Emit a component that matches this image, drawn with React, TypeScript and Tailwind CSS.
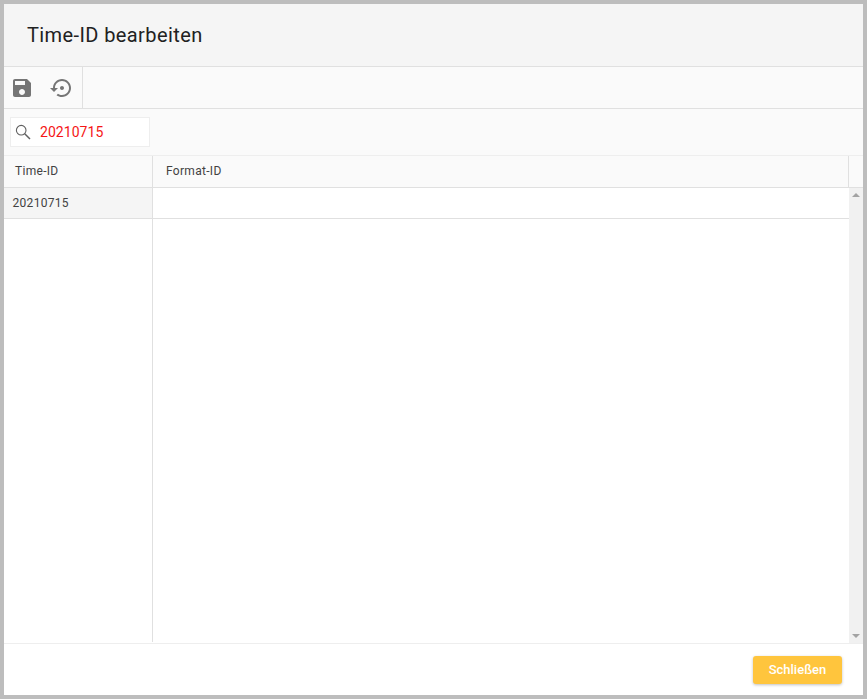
import React from 'react'

// Material icons, same shapes as the toolbar in the dialog
const SaveIcon = () => (
    <svg width="24" height="24" viewBox="0 0 24 24" fill="#757575">
        <path d="M17 3H5c-1.11 0-2 .9-2 2v14c0 1.1.89 2 2 2h14c1.1 0 2-.9 2-2V7l-4-4zm-5 16c-1.66 0-3-1.34-3-3s1.34-3 3-3 3 1.34 3 3-1.34 3-3 3zm3-10H5V5h10v4z" />
    </svg>
)

const RestoreIcon = () => (
    <svg width="24" height="24" viewBox="0 0 24 24" fill="#757575">
        <path d="M14 12c0-1.1-.9-2-2-2s-2 .9-2 2 .9 2 2 2 2-.9 2-2zm-2-9c-4.97 0-9 4.03-9 9H0l4 4 4-4H5c0-3.87 3.13-7 7-7s7 3.13 7 7-3.13 7-7 7c-1.51 0-2.91-.49-4.06-1.3l-1.42 1.44C8.04 20.3 9.94 21 12 21c4.97 0 9-4.03 9-9s-4.03-9-9-9z" />
    </svg>
)

const SearchIcon = () => (
    <svg width="16" height="16" viewBox="0 0 16 16" fill="none" stroke="#616161" strokeWidth="1.1">
        <circle cx="6.2" cy="6.2" r="4.8" />
        <path d="M9.7 9.7 L15 15" strokeWidth="1.5" />
    </svg>
)

export default function App() {
    return (
        <div className="w-[867px] h-[699px] border-4 border-[#bdbdbd] bg-white flex flex-col font-['Roboto',sans-serif] overflow-hidden">
            {/* Titel */}
            <div className="h-[63px] shrink-0 bg-[#f5f5f5] border-b border-[#e0e0e0] flex items-center pl-[23px]">
                <h1 className="text-[20px] font-normal text-[#212121] tracking-[0.4px]">Time-ID bearbeiten</h1>
            </div>

            {/* Toolbar */}
            <div className="h-[42px] shrink-0 bg-[#fafafa] border-b border-[#e0e0e0] flex">
                <div className="w-[79px] border-r border-[#e0e0e0] flex items-center pl-[6px] gap-[16px]">
                    <SaveIcon />
                    <RestoreIcon />
                </div>
            </div>

            {/* Suche */}
            <div className="h-[47px] shrink-0 bg-[#fafafa] border-b border-[#eeeeee] flex items-center pl-[6px]">
                <div className="w-[140px] h-[30px] bg-white border border-[#eeeeee] flex items-center pl-[4px] gap-[9px]">
                    <SearchIcon />
                    <span className="text-[14px] text-[#f51616] tracking-[0.05px]">20210715</span>
                </div>
            </div>

            {/* Tabellenkopf */}
            <div className="h-[32px] shrink-0 bg-[#fafafa] border-b border-[#e0e0e0] flex text-[12px] text-[#424242] tracking-[0.3px]">
                <div className="w-[149px] border-r border-[#e0e0e0] flex items-center pl-[11px] pb-[2px]">Time-ID</div>
                <div className="w-[696px] border-r border-[#e0e0e0] flex items-center pl-[13px] pb-[2px]">Format-ID</div>
                <div className="flex-1" />
            </div>

            {/* Tabelle */}
            <div className="flex-1 min-h-0 flex">
                <div className="w-[845px] flex">
                    <div className="w-[149px] border-r border-[#e0e0e0] mb-[1px]">
                        <div className="h-[31px] bg-[#f5f5f5] border-b border-[#e0e0e0] flex items-center pl-[8.5px] text-[12px] text-[#424242] tracking-[0.3px]">
                            20210715
                        </div>
                    </div>
                    <div className="flex-1">
                        <div className="h-[31px] border-b border-[#e0e0e0]" />
                    </div>
                </div>
                <div className="w-[14px] bg-[#f1f1f1] flex flex-col items-center justify-between py-[5px]">
                    <div className="w-0 h-0 border-l-[4px] border-r-[4px] border-b-[4px] border-l-transparent border-r-transparent border-b-[#a3a3a3]" />
                    <div className="w-0 h-0 border-l-[4px] border-r-[4px] border-t-[4px] border-l-transparent border-r-transparent border-t-[#a3a3a3]" />
                </div>
            </div>

            {/* Footer */}
            <div className="h-[52px] shrink-0 border-t border-[#eeeeee] bg-white flex items-center justify-end pr-[21px]">
                <button className="w-[89px] h-[28px] rounded-[3px] bg-[#ffc53d] text-white text-[13px] font-medium shadow-[0_1px_3px_rgba(0,0,0,0.25)]">
                    Schließen
                </button>
            </div>
        </div>
    )
}
